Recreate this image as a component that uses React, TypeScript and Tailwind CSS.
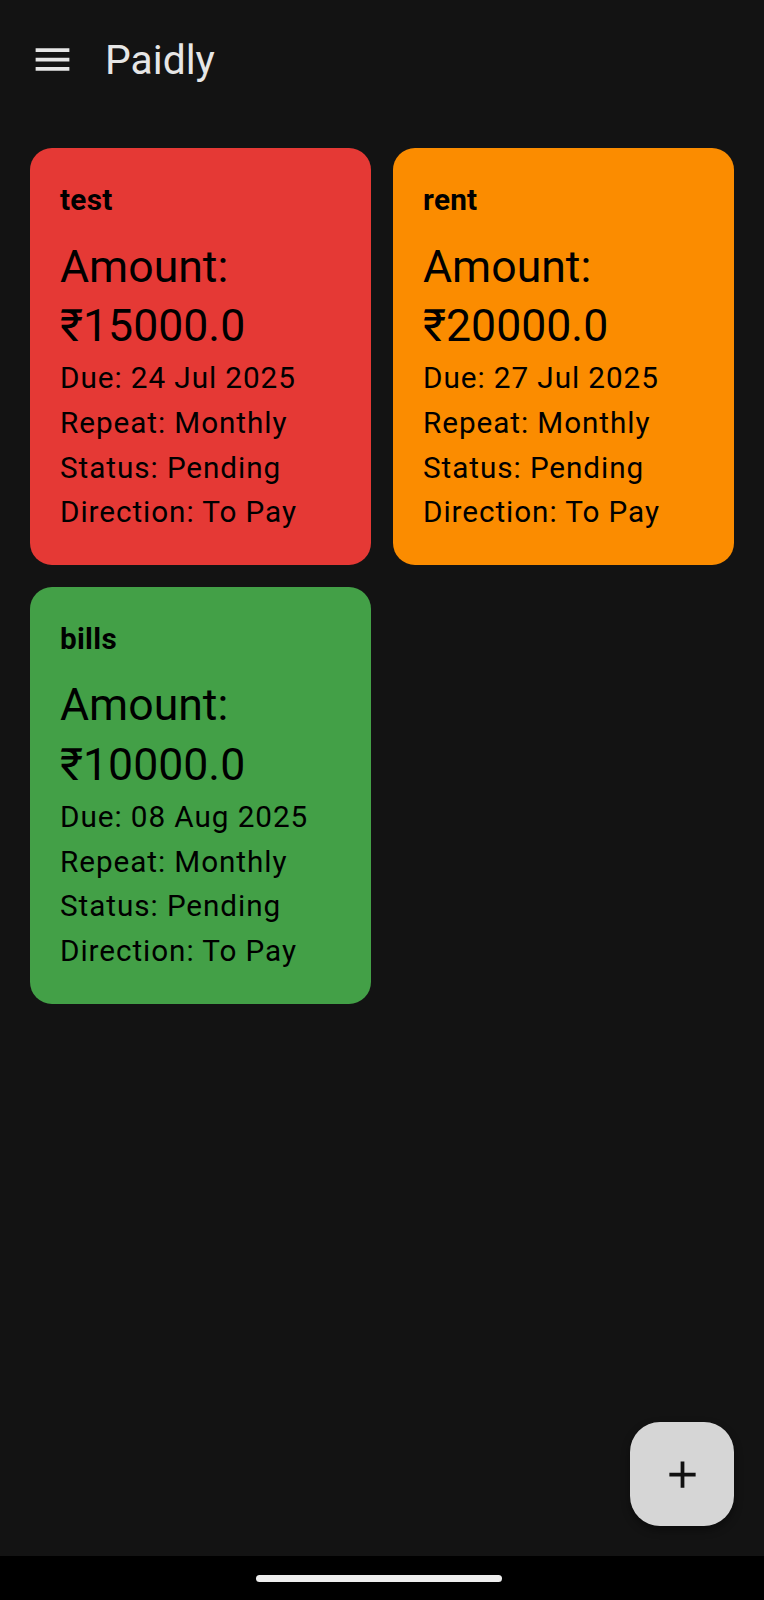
import React from 'react';

type Bill = {
  id: string;
  title: string;
  amount: string;
  due: string;
  repeat: string;
  status: string;
  direction: string;
  color: string;
};

const bills: Bill[] = [
  { id: '1', title: 'test', amount: '₹15000.0', due: '24 Jul 2025', repeat: 'Monthly', status: 'Pending', direction: 'To Pay', color: 'bg-[#e53935]' },
  { id: '2', title: 'rent', amount: '₹20000.0', due: '27 Jul 2025', repeat: 'Monthly', status: 'Pending', direction: 'To Pay', color: 'bg-[#fb8c00]' },
  { id: '3', title: 'bills', amount: '₹10000.0', due: '08 Aug 2025', repeat: 'Monthly', status: 'Pending', direction: 'To Pay', color: 'bg-[#43a047]' },
];

function MenuIcon() {
  return (
    <svg width="45" height="45" viewBox="0 0 24 24" fill="#e6e6e6">
      <path d="M3 18h18v-2H3v2zm0-5h18v-2H3v2zm0-7v2h18V6H3z" />
    </svg>
  );
}

function BillCard({ bill }: { bill: Bill }) {
  return (
    <div className={`${bill.color} rounded-[22px] p-[30px] text-black`}>
      <div className="text-[29.7px] leading-[44.6px] font-bold tracking-[0.28px]">{bill.title}</div>
      <div className="mt-[15px] text-[44.6px] leading-[59.4px]">
        <div>Amount:</div>
        <div>{bill.amount}</div>
      </div>
      <div className="text-[29.7px] leading-[44.6px] tracking-[0.93px]">
        <div>Due: {bill.due}</div>
        <div>Repeat: {bill.repeat}</div>
        <div>Status: {bill.status}</div>
        <div>Direction: {bill.direction}</div>
      </div>
    </div>
  );
}

export default function App() {
  return (
    <div className="relative flex flex-col w-[764px] h-[1600px] bg-[#131313] overflow-hidden" style={{ fontFamily: 'Roboto, "Noto Sans", sans-serif' }}>
      <header className="flex items-center h-[119px] shrink-0">
        <button className="ml-[30px] w-[45px] h-[45px] flex items-center justify-center">
          <MenuIcon />
        </button>
        <h1 className="ml-[30px] text-[40.8px] leading-[52px] text-[#e6e6e6]">Paidly</h1>
      </header>

      <main className="flex-1 px-[30px] pt-[29px]">
        <div className="grid grid-cols-2 gap-[22px] content-start">
          {bills.map(bill => (
            <BillCard key={bill.id} bill={bill} />
          ))}
        </div>
      </main>

      <button className="absolute right-[30px] bottom-[74px] w-[104px] h-[104px] rounded-[30px] bg-[#d6d6d6] flex items-center justify-center shadow-[0_4px_8px_rgba(0,0,0,0.4)]">
        <svg width="45" height="45" viewBox="0 0 24 24" fill="#111">
          <path d="M19 13h-6v6h-2v-6H5v-2h6V5h2v6h6v2z" />
        </svg>
      </button>

      <div className="h-[44px] shrink-0 bg-black flex items-center justify-center">
        <div className="w-[246px] h-[7px] mr-[6px] rounded-full bg-[#eeeeee]" />
      </div>
    </div>
  );
}
